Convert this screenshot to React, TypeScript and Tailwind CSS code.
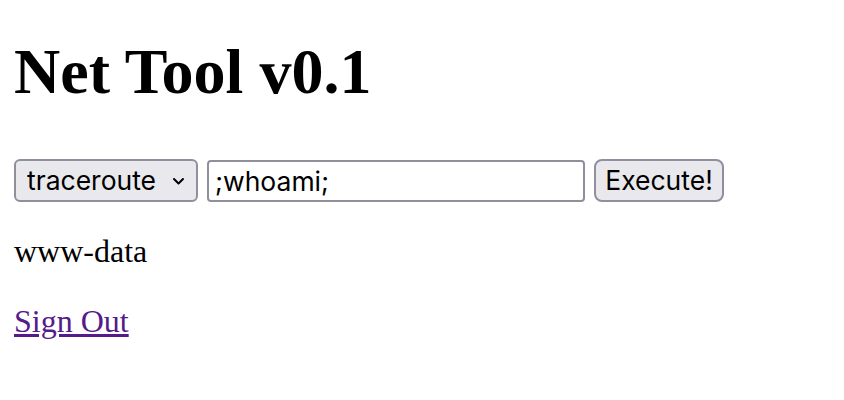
import { useState } from "react";

export default function App() {
  const [tool, setTool] = useState("traceroute");
  const [target, setTarget] = useState(";whoami;");

  return (
    <div className="min-h-[400px] bg-white pl-[14px] pt-[35px] text-black">
      <h1 className="font-['Liberation_Serif',serif] text-[64px] font-bold leading-[74px]">
        Net Tool v0.1
      </h1>

      <form
        className="mt-[50px] flex items-center gap-[9px] font-['Inter',sans-serif] text-[26.5px]"
        onSubmit={(e) => e.preventDefault()}
      >
        <div className="relative h-[43px] w-[184px]">
          <select
            value={tool}
            onChange={(e) => setTool(e.target.value)}
            className="h-full w-full appearance-none rounded-[6px] border-2 border-[#8f8f9d] bg-[#e9e9ed] pl-[11px] text-black outline-none"
          >
            <option value="ping">ping</option>
            <option value="traceroute">traceroute</option>
            <option value="nslookup">nslookup</option>
          </select>
          <svg
            className="pointer-events-none absolute right-[13px] top-[18px] h-[9px] w-[13px]"
            viewBox="0 0 13 9"
            fill="none"
            stroke="black"
            strokeWidth="2"
            strokeLinecap="round"
            strokeLinejoin="round"
          >
            <path d="M2 2l4.5 4.5L11 2" />
          </svg>
        </div>

        <input
          value={target}
          onChange={(e) => setTarget(e.target.value)}
          className="h-[42px] w-[378px] rounded-[4px] border-2 border-[#8f8f9d] bg-white px-[6px] text-black outline-none"
        />

        <button
          type="submit"
          className="h-[43px] w-[130px] rounded-[8px] border-2 border-[#8f8f9d] bg-[#e9e9ed] text-black"
        >
          Execute!
        </button>
      </form>

      <p className="mt-[31px] font-['Liberation_Serif',serif] text-[32px] leading-[37px]">
        www-data
      </p>

      <a
        href="#"
        className="mt-[33px] inline-block font-['Liberation_Serif',serif] text-[32px] leading-[37px] text-[#551a8b] underline"
      >
        Sign Out
      </a>
    </div>
  );
}
